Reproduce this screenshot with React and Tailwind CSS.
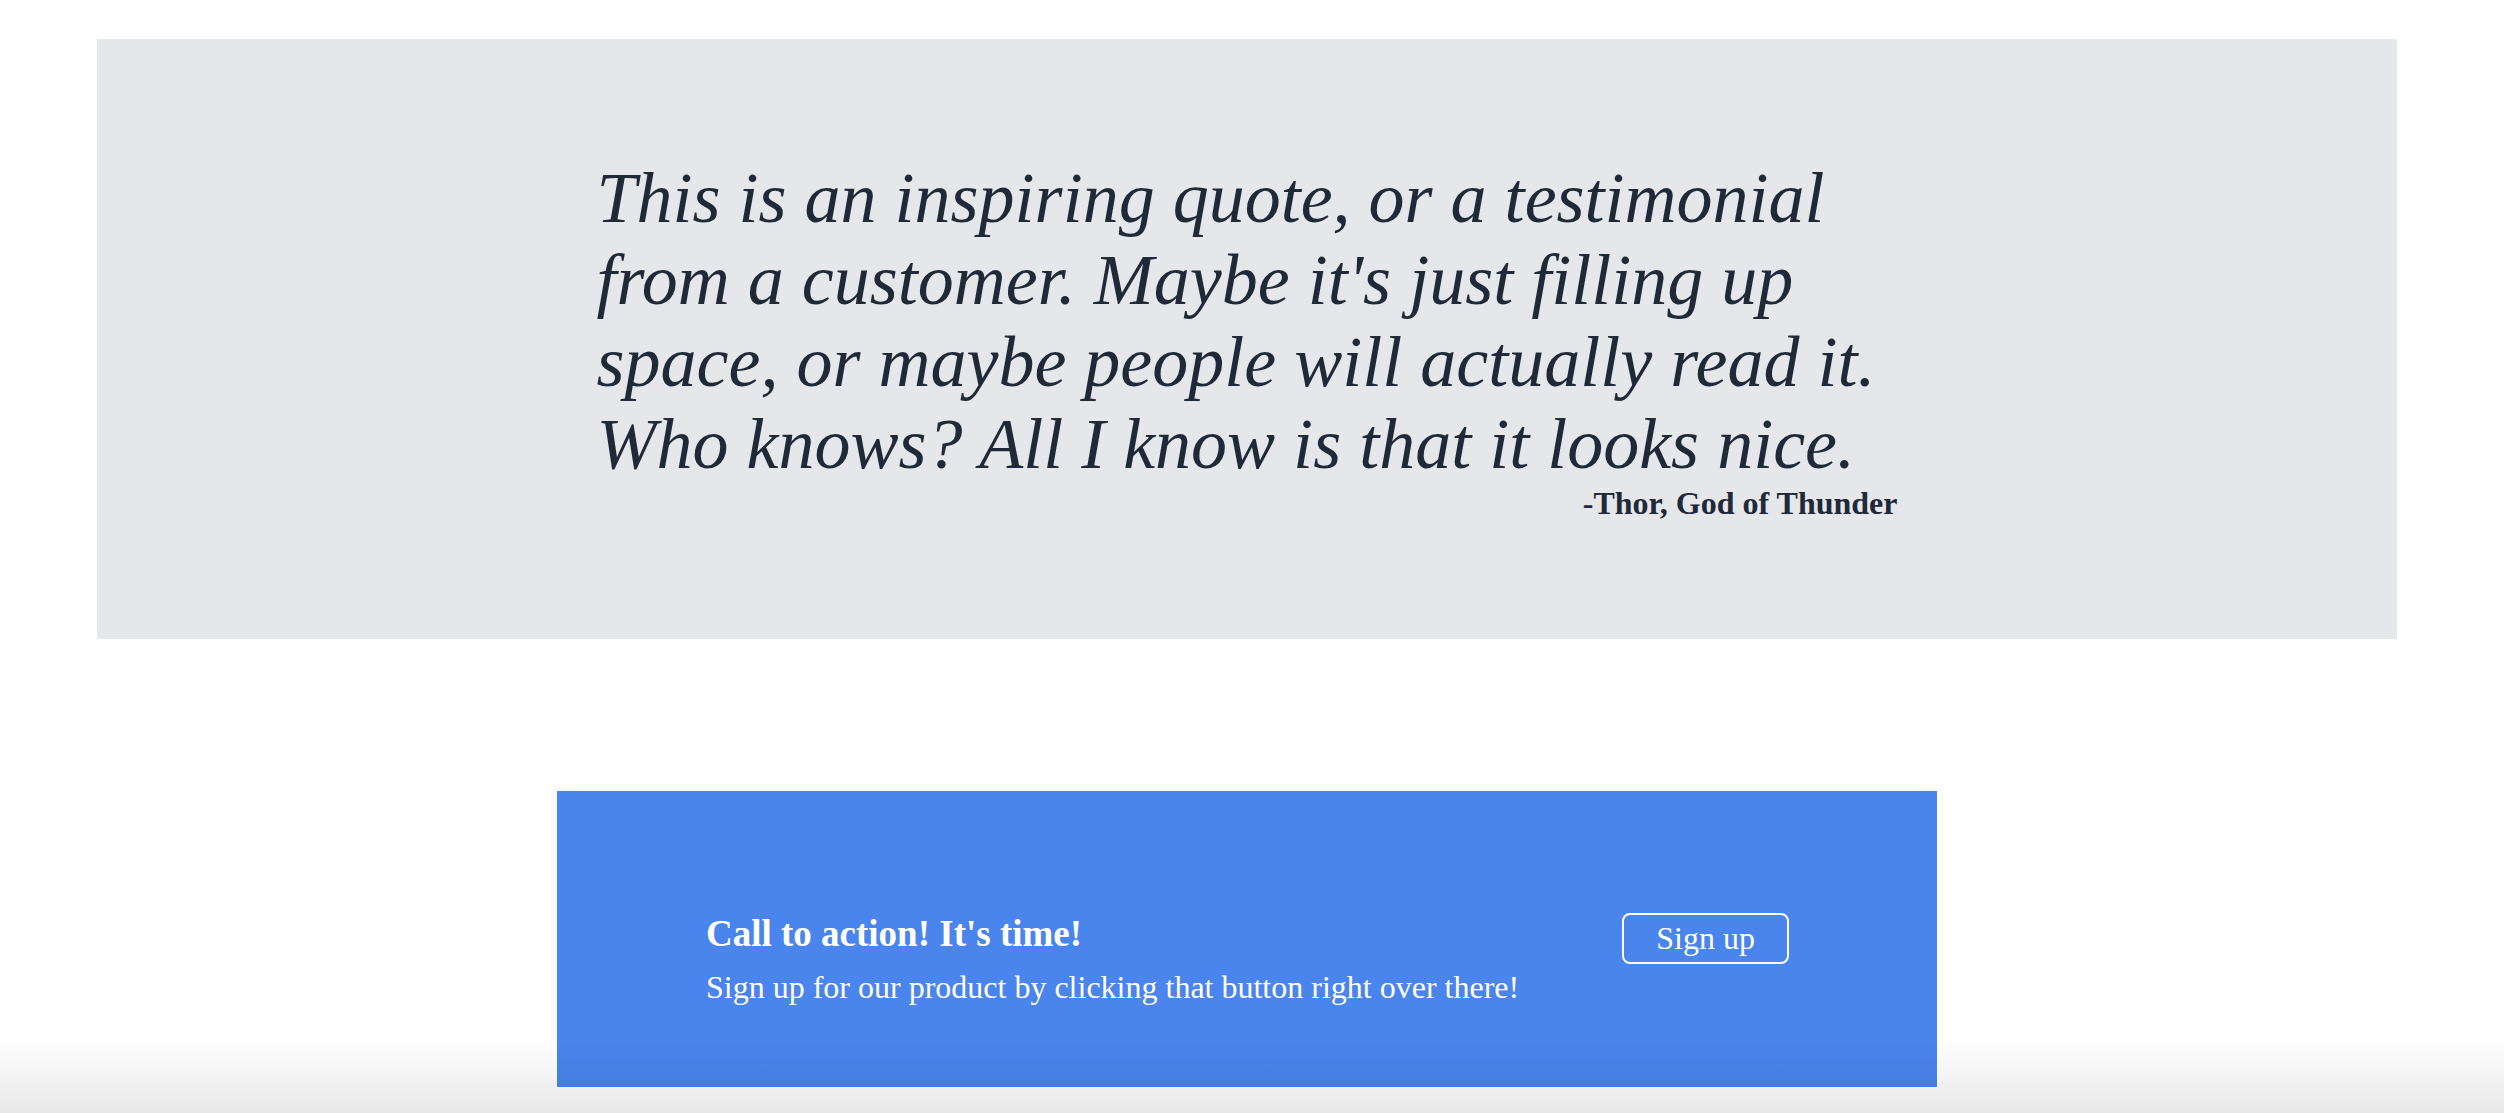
import React from 'react';

const Quote = () => (
  <section className="mx-auto w-[2300px] h-[600px] bg-[#e5e7eb] flex items-center justify-center">
    <div className="w-[1301px] text-[#1f2937]">
      <p className="italic text-[72px] leading-[82px]">
        This is an inspiring quote, or a testimonial from a customer. Maybe it's just filling up space, or maybe people will actually read it. Who knows? All I know is that it looks nice.
      </p>
      <p className="text-right font-bold text-[32px] leading-[37px]">-Thor, God of Thunder</p>
    </div>
  </section>
);

const CallToAction = () => (
  <section className="mx-auto w-[1380px] h-[296px] bg-[#4a84ed] text-white pl-[149px] pr-[148px] pt-[119px]">
    <div className="flex justify-between items-start">
      <div>
        <h2 className="font-bold text-[37px] leading-[43px] mt-[2px]">Call to action! It's time!</h2>
        <p className="text-[32px] leading-[37px] mt-[14px]">
          Sign up for our product by clicking that button right over there!
        </p>
      </div>
      <button className="h-[51px] px-[32px] border-2 border-white rounded-[8px] text-[32px] leading-[37px] mt-[3px] flex items-center">
        Sign up
      </button>
    </div>
  </section>
);

export default function App() {
  return (
    <div className="relative w-[2504px] h-[1113px] overflow-hidden bg-white font-['Liberation_Serif',serif]">
      <div className="w-[2494px] pt-[39px]">
        <Quote />
        <div className="h-[152px]" />
        <CallToAction />
      </div>
      {/* bottom fade, sits over the page */}
      <div className="pointer-events-none absolute left-0 right-0 bottom-0 h-[75px] bg-linear-to-b from-black/0 to-black/[0.09]" />
    </div>
  );
}
